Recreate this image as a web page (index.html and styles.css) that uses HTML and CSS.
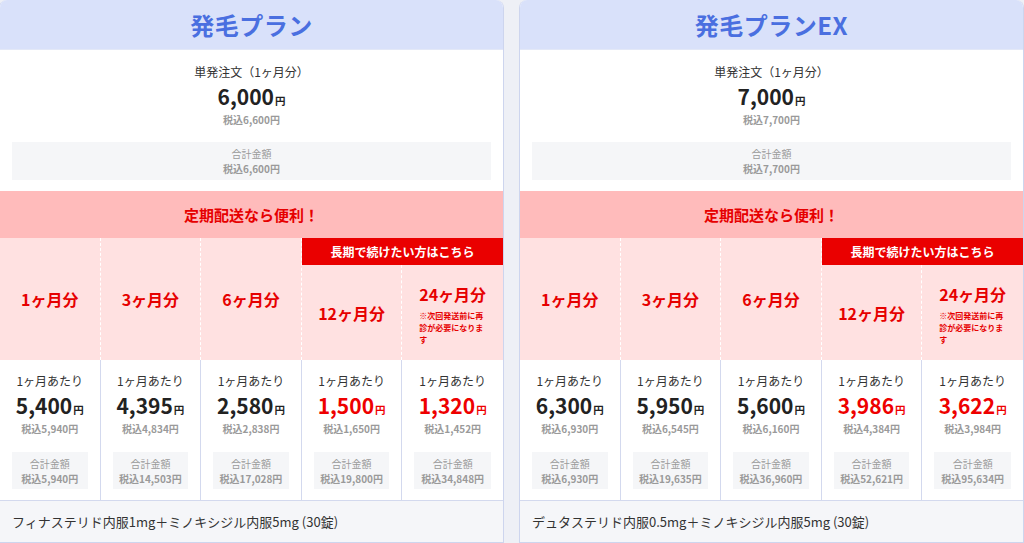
FILE: index.html
```html
<!DOCTYPE html>
<html lang="ja">
<head>
<meta charset="utf-8">
<title>発毛プラン</title>
<link rel="stylesheet" href="styles.css">
</head>
<body>
<div class="carousel">
  <section class="card">
    <header class="plan-head"><h2 class="plan-title">発毛プラン</h2></header>
    <div class="single">
      <div class="single-label">単発注文（1ヶ月分）</div>
      <div class="price">6,000<span class="yen">円</span></div>
      <div class="tax">税込6,600円</div>
      <div class="total total-wide"><div>合計金額</div><div class="total-val">税込6,600円</div></div>
    </div>
    <div class="band">定期配送なら便利！</div>
    <div class="terms">
      <div class="term term-full">1ヶ月分</div>
      <div class="term term-full">3ヶ月分</div>
      <div class="term term-full">6ヶ月分</div>
      <div class="banner">長期で続けたい方はこちら</div>
      <div class="term term-low">12ヶ月分</div>
      <div class="term term-low term-last"><div>24ヶ月分<p class="note">※次回発送前に再診が必要になります</p></div></div>
    </div>
    <div class="prices">
      <div class="cell"><div class="per">1ヶ月あたり</div><div class="price">5,400<span class="yen">円</span></div><div class="tax">税込5,940円</div><div class="total"><div>合計金額</div><div class="total-val">税込5,940円</div></div></div>
      <div class="cell"><div class="per">1ヶ月あたり</div><div class="price">4,395<span class="yen">円</span></div><div class="tax">税込4,834円</div><div class="total"><div>合計金額</div><div class="total-val">税込14,503円</div></div></div>
      <div class="cell"><div class="per">1ヶ月あたり</div><div class="price">2,580<span class="yen">円</span></div><div class="tax">税込2,838円</div><div class="total"><div>合計金額</div><div class="total-val">税込17,028円</div></div></div>
      <div class="cell"><div class="per">1ヶ月あたり</div><div class="price price-red">1,500<span class="yen">円</span></div><div class="tax">税込1,650円</div><div class="total"><div>合計金額</div><div class="total-val">税込19,800円</div></div></div>
      <div class="cell"><div class="per">1ヶ月あたり</div><div class="price price-red">1,320<span class="yen">円</span></div><div class="tax">税込1,452円</div><div class="total"><div>合計金額</div><div class="total-val">税込34,848円</div></div></div>
    </div>
    <footer class="foot">フィナステリド内服1mg＋ミノキシジル内服5mg (30錠)</footer>
  </section>

  <section class="card">
    <header class="plan-head"><h2 class="plan-title">発毛プランEX</h2></header>
    <div class="single">
      <div class="single-label">単発注文（1ヶ月分）</div>
      <div class="price">7,000<span class="yen">円</span></div>
      <div class="tax">税込7,700円</div>
      <div class="total total-wide"><div>合計金額</div><div class="total-val">税込7,700円</div></div>
    </div>
    <div class="band">定期配送なら便利！</div>
    <div class="terms">
      <div class="term term-full">1ヶ月分</div>
      <div class="term term-full">3ヶ月分</div>
      <div class="term term-full">6ヶ月分</div>
      <div class="banner">長期で続けたい方はこちら</div>
      <div class="term term-low">12ヶ月分</div>
      <div class="term term-low term-last"><div>24ヶ月分<p class="note">※次回発送前に再診が必要になります</p></div></div>
    </div>
    <div class="prices">
      <div class="cell"><div class="per">1ヶ月あたり</div><div class="price">6,300<span class="yen">円</span></div><div class="tax">税込6,930円</div><div class="total"><div>合計金額</div><div class="total-val">税込6,930円</div></div></div>
      <div class="cell"><div class="per">1ヶ月あたり</div><div class="price">5,950<span class="yen">円</span></div><div class="tax">税込6,545円</div><div class="total"><div>合計金額</div><div class="total-val">税込19,635円</div></div></div>
      <div class="cell"><div class="per">1ヶ月あたり</div><div class="price">5,600<span class="yen">円</span></div><div class="tax">税込6,160円</div><div class="total"><div>合計金額</div><div class="total-val">税込36,960円</div></div></div>
      <div class="cell"><div class="per">1ヶ月あたり</div><div class="price price-red">3,986<span class="yen">円</span></div><div class="tax">税込4,384円</div><div class="total"><div>合計金額</div><div class="total-val">税込52,621円</div></div></div>
      <div class="cell"><div class="per">1ヶ月あたり</div><div class="price price-red">3,622<span class="yen">円</span></div><div class="tax">税込3,984円</div><div class="total"><div>合計金額</div><div class="total-val">税込95,634円</div></div></div>
    </div>
    <footer class="foot">デュタステリド内服0.5mg＋ミノキシジル内服5mg (30錠)</footer>
  </section>
</div>
</body>
</html>
```

FILE: styles.css
```css
* { box-sizing: border-box; }
html, body { margin: 0; padding: 0; }
body {
  width: 1024px;
  height: 543px;
  overflow: hidden;
  background: #eef0f6;
  font-family: "Noto Sans CJK JP", "Noto Sans", sans-serif;
  color: #333;
}
.carousel {
  display: flex;
  gap: 15px;
  margin-left: -1px;
  align-items: stretch;
  height: 543px;
}
.card {
  flex: 0 0 505px;
  width: 505px;
  background: #fff;
  border: 1px solid #cdd5ee;
  border-top: none;
  border-radius: 8px 8px 0 0;
  overflow: hidden;
  display: flex;
  flex-direction: column;
}
.card > * { flex-shrink: 0; }
.plan-head {
  height: 50px;
  background: #d9e1fa;
  display: flex;
  align-items: center;
  justify-content: center;
  border-bottom: 1px solid #e3e8f7;
}
.plan-title {
  margin: 0;
  font-size: 24px;
  font-weight: 700;
  color: #4a6fe0;
  line-height: 1;
  letter-spacing: 0.5px;
}
.single {
  padding: 12px 12px 12px;
  text-align: center;
  height: 141px;
}
.single-label {
  font-size: 12px;
  line-height: 20px;
  color: #333;
}
.price {
  font-size: 21px;
  font-weight: 700;
  line-height: 24px;
  color: #222;
  padding-top: 2px;
}
.price-red { color: #ee0000; }
.yen {
  font-size: 10.5px;
  margin-left: 1px;
}
.tax {
  font-size: 10px;
  font-weight: 700;
  color: #9a9a9a;
  line-height: 14px;
}
.total {
  background: #f5f6f8;
  color: #9a9a9a;
  font-size: 10px;
  line-height: 15px;
  padding: 4px 0;
  text-align: center;
}
.total-val { font-weight: 700; }
.total-wide {
  margin-top: 15px;
  height: 38px;
}
.band {
  height: 47px;
  background: #ffbbbb;
  color: #e60000;
  font-weight: 700;
  font-size: 15px;
  display: flex;
  align-items: center;
  justify-content: center;
}
.terms {
  height: 122px;
  background: #ffe1e1;
  display: grid;
  grid-template-columns: repeat(5, 1fr);
  grid-template-rows: 27px 1fr;
}
.term {
  color: #e60000;
  font-weight: 700;
  font-size: 16px;
  display: flex;
  align-items: center;
  justify-content: center;
  border-right: 1px dashed #ffffff;
}
.term-full { grid-row: 1 / 3; }
.term-low { grid-row: 2; }
.term-last { border-right: none; align-items: flex-start; padding-top: 17px; }
.banner {
  grid-column: 4 / 6;
  grid-row: 1;
  background: #ea0000;
  color: #fff;
  font-size: 12px;
  font-weight: 700;
  display: flex;
  align-items: center;
  justify-content: center;
}
.note {
  margin: 4px 0 0;
  font-size: 8px;
  line-height: 12px;
  width: 66px;
  text-align: left;
  color: #e60000;
}
.prices {
  display: grid;
  grid-template-columns: repeat(5, 1fr);
  height: 140px;
}
.cell {
  border-right: 1px solid #d3d9ee;
  padding: 11px 12px 0;
  text-align: center;
}
.cell:last-child { border-right: none; }
.per {
  font-size: 12px;
  line-height: 20px;
  color: #333;
}
.cell .total { margin-top: 16px; height: 37px; }
.foot {
  flex: 1 0 auto;
  background: #f5f6f9;
  border-top: 1px solid #d3d9ee;
  font-size: 13px;
  color: #333;
  padding: 11px 12px;
  line-height: 20px;
}
```
